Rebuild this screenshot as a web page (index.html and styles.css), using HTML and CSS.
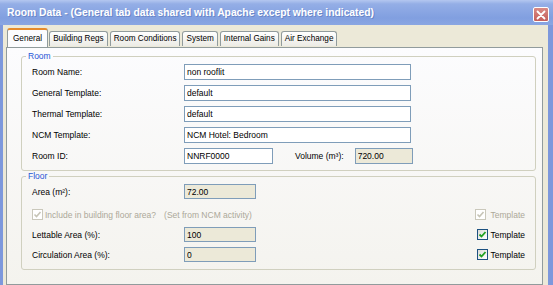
FILE: index.html
```html
<!DOCTYPE html>
<html lang="en">
<head>
    <meta charset="UTF-8">
    <title>Room Data</title>
    <link rel="stylesheet" href="styles.css">
</head>
<body>
    <div class="window">
        <!-- Title bar -->
        <div class="titlebar">
            <span class="title">Room Data - (General tab data shared with Apache except where indicated)</span>
            <span class="close">
                <svg width="10" height="10" viewBox="0 0 10 10">
                    <path d="M1.5 1.5 L8.5 8.5 M8.5 1.5 L1.5 8.5" stroke="#ffffff" stroke-width="1.8" stroke-linecap="round"/>
                </svg>
            </span>
        </div>

        <div class="frame">
            <!-- Tabs -->
            <div class="tabs">
                <span class="tab selected">General</span>
                <span class="tab">Building Regs</span>
                <span class="tab">Room Conditions</span>
                <span class="tab">System</span>
                <span class="tab">Internal Gains</span>
                <span class="tab">Air Exchange</span>
            </div>

            <div class="panel">
                <!-- Room group -->
                <fieldset class="group room">
                    <legend>Room</legend>
                    <div class="row">
                        <label>Room Name:</label>
                        <input class="field wide" type="text" value="non rooflit">
                    </div>
                    <div class="row">
                        <label>General Template:</label>
                        <input class="field wide" type="text" value="default">
                    </div>
                    <div class="row">
                        <label>Thermal Template:</label>
                        <input class="field wide" type="text" value="default">
                    </div>
                    <div class="row">
                        <label>NCM Template:</label>
                        <input class="field wide" type="text" value="NCM Hotel: Bedroom">
                    </div>
                    <div class="row">
                        <label>Room ID:</label>
                        <input class="field id" type="text" value="NNRF0000">
                        <span class="volume-label">Volume (m&sup3;):</span>
                        <input class="field volume locked" type="text" value="720.00" readonly>
                    </div>
                </fieldset>

                <!-- Floor group -->
                <fieldset class="group floor">
                    <legend>Floor</legend>
                    <div class="row">
                        <label>Area (m&sup2;):</label>
                        <input class="field short locked" type="text" value="72.00" readonly>
                    </div>
                    <div class="row option">
                        <span class="check disabled">
                            <svg width="9" height="9" viewBox="0 0 9 9"><path d="M1.5 4.5 L3.5 6.5 L7.5 2" fill="none" stroke="#c6c4b6" stroke-width="1.6"/></svg>
                        </span>
                        <span class="muted">Include in building floor area?</span>
                        <span class="muted note">(Set from NCM activity)</span>
                        <span class="template muted">
                            <span class="check disabled">
                                <svg width="9" height="9" viewBox="0 0 9 9"><path d="M1.5 4.5 L3.5 6.5 L7.5 2" fill="none" stroke="#c6c4b6" stroke-width="1.6"/></svg>
                            </span>
                            Template
                        </span>
                    </div>
                    <div class="row">
                        <label>Lettable Area (%):</label>
                        <input class="field short locked" type="text" value="100">
                        <span class="template">
                            <span class="check">
                                <svg width="9" height="9" viewBox="0 0 9 9"><path d="M1.5 4.5 L3.5 6.5 L7.5 2" fill="none" stroke="#21a121" stroke-width="1.8"/></svg>
                            </span>
                            Template
                        </span>
                    </div>
                    <div class="row">
                        <label>Circulation Area (%):</label>
                        <input class="field short locked" type="text" value="0">
                        <span class="template">
                            <span class="check">
                                <svg width="9" height="9" viewBox="0 0 9 9"><path d="M1.5 4.5 L3.5 6.5 L7.5 2" fill="none" stroke="#21a121" stroke-width="1.8"/></svg>
                            </span>
                            Template
                        </span>
                    </div>
                </fieldset>
            </div>
        </div>
    </div>
</body>
</html>
```
FILE: styles.css
```css
/* General Styles */
body {
    margin: 0;
    padding: 0;
    font-family: 'Liberation Sans', Arial, sans-serif;
    font-size: 8.5px;
    color: #000000;
    background-color: #ece9d8;
}
.window {
    width: 553px;
    height: 285px;
    display: flex;
    flex-direction: column;
    overflow: hidden;
}
/* Title bar */
.titlebar {
    flex: none;
    height: 25px;
    display: flex;
    align-items: center;
    padding: 0 4px 0 7px;
    background: linear-gradient(#b4c7f0 0, #94aee6 4px, #819fe0 18px, #8aa6e2 25px);
    color: #ffffff;
    font-weight: bold;
    font-size: 10.3px;
    text-shadow: 1px 1px 0 #6a86c8;
}
.title {
    flex: 1;
    white-space: nowrap;
}
.close {
    align-self: flex-start;
    margin-top: 7px;
    width: 16px;
    height: 15px;
    box-sizing: border-box;
    border: 1px solid #ffffff;
    border-radius: 2px;
    background: linear-gradient(#d98a84, #c45f5c);
    display: flex;
    align-items: center;
    justify-content: center;
}
/* Frame */
.frame {
    flex: 1;
    display: flex;
    flex-direction: column;
    border-left: 3px solid #7d98dc;
    border-right: 5px solid #7d98dc;
    padding: 3px 5px 0 3px;
}
/* Tabs */
.tabs {
    display: flex;
    align-items: flex-end;
    height: 19px;
    margin-left: 1px;
    position: relative;
    z-index: 1;
    font-size: 8.2px;
}
.tab {
    height: 15px;
    box-sizing: border-box;
    padding: 0 3px;
    margin-right: 2px;
    margin-bottom: 1px;
    line-height: 14px;
    border: 1px solid #919b9c;
    border-bottom: none;
    border-radius: 3px 3px 0 0;
    background: linear-gradient(#ffffff, #ecebe5);
    white-space: nowrap;
}
.tab.selected {
    height: 19px;
    margin-bottom: 0;
    margin-right: 1px;
    padding: 2px 5px 0;
    border-top: 2px solid #e68b2c;
    background: #fcfcfe;
}
/* Panel */
.panel {
    flex: 1;
    border: 1px solid #919b9c;
    background: linear-gradient(#fcfcfe, #f4f3ee);
    padding: 3px 6px 0 14px;
}
.group {
    margin: 0;
    padding: 3px 10px 6px;
    border: 1px solid #d0d0bf;
    border-radius: 3px;
}
.group.floor {
    padding-bottom: 7px;
}
.group legend {
    margin-left: -6px;
    padding: 0 2px;
    line-height: 10px;
    color: #1f55d6;
}
.row {
    display: flex;
    align-items: center;
    height: 16px;
}
.row + .row {
    margin-top: 5px;
}
.floor .row {
    height: 15px;
}
.floor .row.option {
    margin-top: 8px;
    margin-bottom: 2px;
}
.row label {
    width: 152px;
    flex: none;
}
/* Fields */
.field {
    height: 100%;
    box-sizing: border-box;
    margin: 0;
    padding: 0 2px;
    border: 1px solid #7f9db9;
    background: #ffffff;
    font: inherit;
    color: #000000;
    outline: none;
}
.field.wide {
    width: 227px;
}
.field.id {
    width: 89px;
}
.field.volume {
    width: 58px;
}
.field.short {
    width: 72px;
}
.field.locked {
    background: #ece9d8;
}
.volume-label {
    margin-left: 22px;
    margin-right: 11px;
}
/* Checkboxes */
.check {
    width: 11px;
    height: 11px;
    box-sizing: border-box;
    border: 1px solid #1c5180;
    background: linear-gradient(135deg, #dcdcd7, #ffffff);
    display: inline-flex;
    align-items: center;
    justify-content: center;
    flex: none;
}
.check.disabled {
    border-color: #cac8bb;
    background: #ffffff;
}
.option .check {
    margin-right: 2px;
}
.muted {
    color: #aca899;
}
.note {
    margin-left: 8px;
}
.template {
    margin-left: auto;
    display: flex;
    align-items: center;
    gap: 3px;
}
```
